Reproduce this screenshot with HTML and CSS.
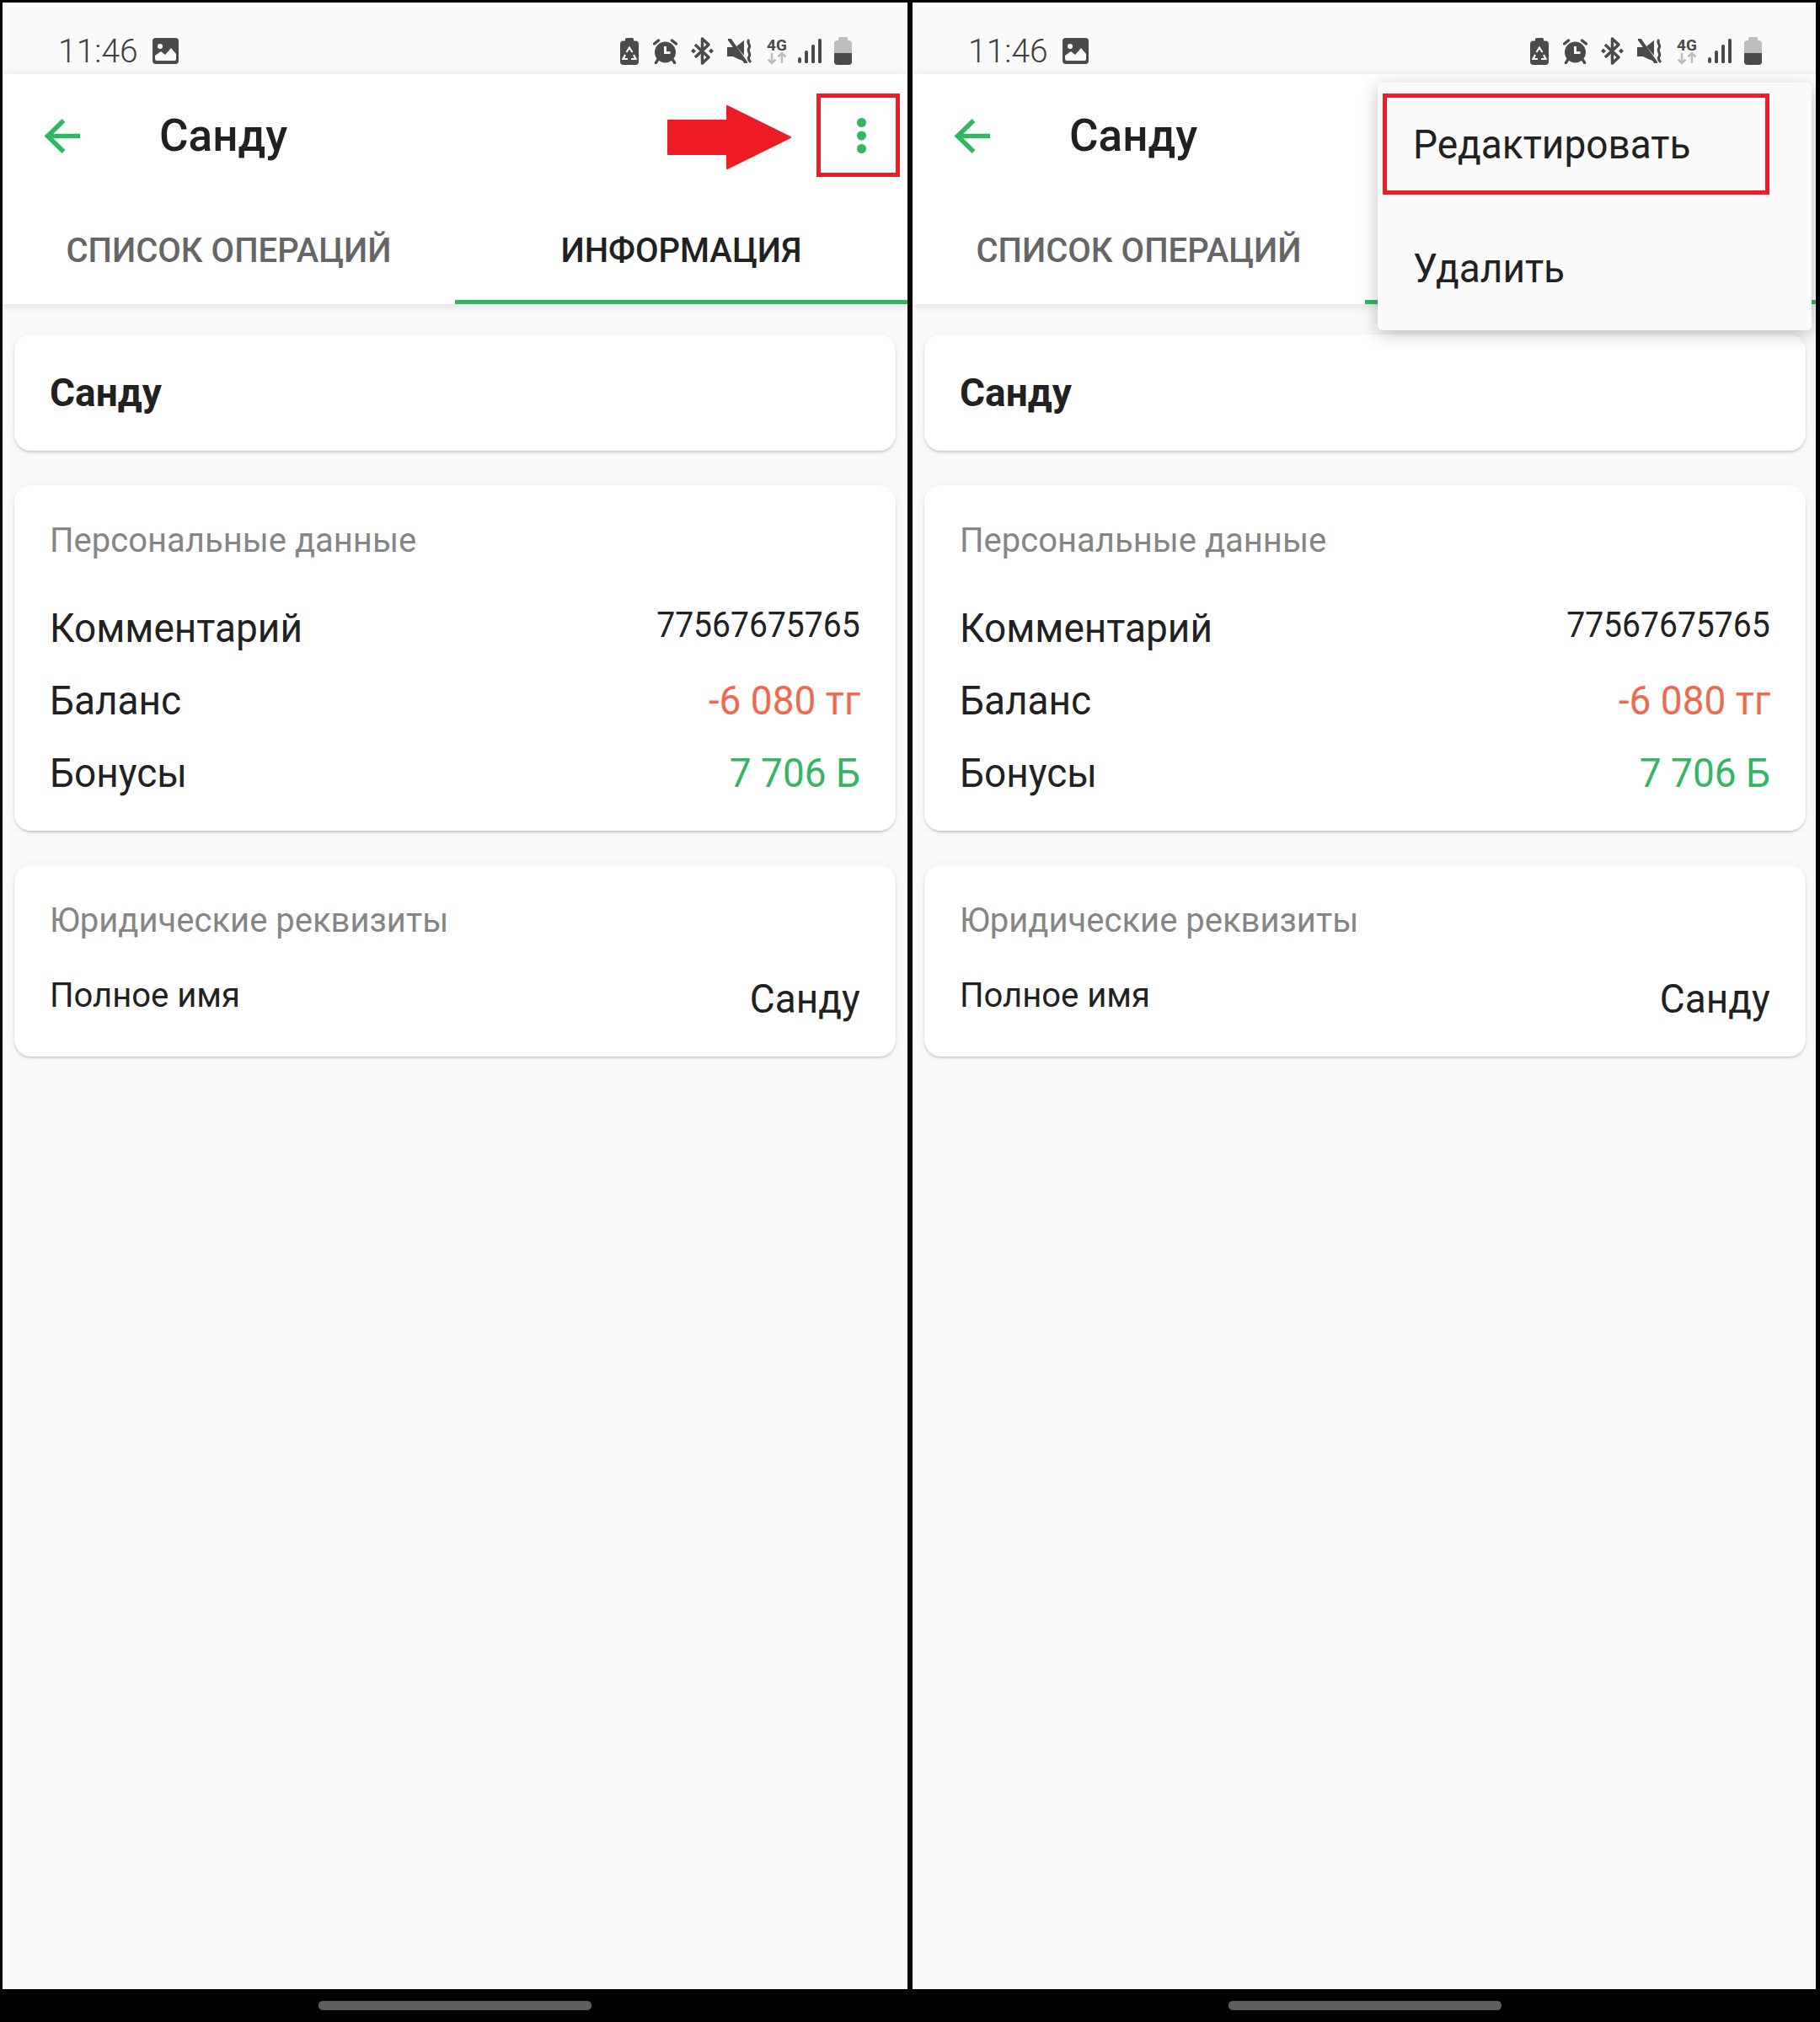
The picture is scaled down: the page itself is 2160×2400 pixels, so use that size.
FILE: index.html
```html
<!DOCTYPE html>
<html lang="ru">
<head>
<meta charset="utf-8">
<title>Санду</title>
<link rel="stylesheet" href="styles.css">
</head>
<body>
<div class="desktop">

  <section class="phone">
    <div class="screen">
      <div class="statusbar">
        <span class="time">11:46</span>
        <svg class="ic-image" width="31" height="31" viewBox="0 0 31 31"><rect width="31" height="31" rx="4" fill="#4a4a4a"/><circle cx="9" cy="10" r="3" fill="#fafafa"/><path d="M3 25V21L10 16L15 20L22 12L28 19V25A2 2 0 0 1 26 27H5A2 2 0 0 1 3 25Z" fill="#fafafa"/></svg>
        <div class="status-icons">
          <svg class="si si-eco" width="22" height="32" viewBox="0 0 22 32"><rect x="6" width="10" height="6" rx="1.5" fill="#4a4a4a"/><rect y="3.500" width="22" height="28.500" rx="4" fill="#4a4a4a"/><g fill="none" stroke="#fafafa" stroke-width="2.200"><path d="M7.500 17L11 11.500L14.500 17"/><path d="M16 20L18.500 25H13"/><path d="M9 25H3.500L6 20"/></g></svg>
          <svg class="si si-alarm" width="29" height="30" viewBox="0 0 29 30"><g fill="none" stroke="#4a4a4a" stroke-width="3.500" stroke-linecap="round"><path d="M1.500 6L6.500 2"/><path d="M22.500 2L27.500 6"/><path d="M5.500 25L3.500 28.500"/><path d="M23.500 25L25.500 28.500"/></g><circle cx="14.500" cy="16" r="12.500" fill="#4a4a4a"/><path d="M14.500 9V16.500H20.500" fill="none" stroke="#fafafa" stroke-width="3"/></svg>
          <svg class="si si-bt" width="27" height="33" viewBox="0 0 27 33"><path d="M5 9L21 24L13.500 31V2L21 9L5 24" fill="none" stroke="#4a4a4a" stroke-width="3.500" stroke-linejoin="round"/><path d="M0 16.500L3 13.500L6 16.500L3 19.500ZM21 16.500L24 13.500L27 16.500L24 19.500Z" fill="#4a4a4a"/></svg>
          <svg class="si si-mute" width="30" height="29" viewBox="0 0 30 29"><path d="M0 10H7L21 27L13 24L7 21H0ZM11 9L20 2V20Z" fill="#4a4a4a"/><path d="M3 1L22 28" stroke="#4a4a4a" stroke-width="4" stroke-linecap="round"/><path d="M26 1C22 5 29 7 26 11C23 15 29 18 26 21C24 24 26 26 28 28" fill="none" stroke="#4a4a4a" stroke-width="3"/></svg>
          <svg class="si si-net" width="24" height="38" viewBox="0 -4 24 38"><text class="net-label" x="12" y="14" text-anchor="middle">4G</text><g fill="none" stroke="#bdbdbd" stroke-width="2.500"><path d="M6 17V29M1.500 24.500L6 29L10.500 24.500"/><path d="M18 29V17M13.500 21.500L18 17L22.500 21.500"/></g></svg>
          <svg class="si si-sig" width="28" height="29" viewBox="0 0 28 29"><g fill="#4a4a4a"><rect y="22" width="4" height="7" rx="2"/><rect x="8" y="14" width="4" height="15" rx="1.500"/><rect x="16" y="7" width="4" height="22" rx="1.500"/><rect x="24" width="4" height="29" rx="1.500"/></g></svg>
          <svg class="si si-batt" width="21" height="33" viewBox="0 0 21 33"><rect x="5" width="11" height="6" rx="1.500" fill="#bdbdbd"/><rect y="4" width="21" height="29" rx="4" fill="#bdbdbd"/><path d="M0 19H21V29A4 4 0 0 1 17 33H4A4 4 0 0 1 0 29Z" fill="#4a4a4a"/></svg>
        </div>
      </div>

      <header class="appbar">
        <div class="toolbar">
          <svg class="back" width="42" height="41" viewBox="0 0 42 41"><path d="M42 20.500H3.500M22.500 2L3.500 20.500L22.500 39" fill="none" stroke="#2fb85f" stroke-width="5.500"/></svg>
          <h1 class="title">Санду</h1>
          <svg class="more" width="11" height="42" viewBox="0 0 11 42"><g fill="#2fb85f"><circle cx="5.500" cy="5.500" r="5.500"/><circle cx="5.500" cy="21" r="5.500"/><circle cx="5.500" cy="36.500" r="5.500"/></g></svg>
          <svg class="callout-arrow" width="147" height="76" viewBox="0 0 147 76"><path d="M1 18H71V1L146 38L71 75V58H1Z" fill="#ee1c25" stroke="#ee1c25" stroke-width="2" stroke-linejoin="round"/></svg>
          <div class="callout-box callout-more"></div>
        </div>
        <nav class="tabs">
          <div class="tab">СПИСОК ОПЕРАЦИЙ</div>
          <div class="tab tab-active">ИНФОРМАЦИЯ</div>
        </nav>
      </header>

      <main class="content">
        <div class="card card-name"><span class="name">Санду</span></div>
        <div class="card">
          <h2 class="card-title">Персональные данные</h2>
          <div class="rows">
            <div class="row"><span class="label">Комментарий</span><span class="value value-small">77567675765</span></div>
            <div class="row"><span class="label">Баланс</span><span class="value value-neg">-6 080 тг</span></div>
            <div class="row"><span class="label">Бонусы</span><span class="value value-pos">7 706 Б</span></div>
          </div>
        </div>
        <div class="card">
          <h2 class="card-title">Юридические реквизиты</h2>
          <div class="rows rows-legal">
            <div class="row"><span class="label label-small">Полное имя</span><span class="value">Санду</span></div>
          </div>
        </div>
      </main>
    </div>
    <div class="navbar"><span class="handle"></span></div>
  </section>

  <section class="phone">
    <div class="screen">
      <div class="statusbar">
        <span class="time">11:46</span>
        <svg class="ic-image" width="31" height="31" viewBox="0 0 31 31"><rect width="31" height="31" rx="4" fill="#4a4a4a"/><circle cx="9" cy="10" r="3" fill="#fafafa"/><path d="M3 25V21L10 16L15 20L22 12L28 19V25A2 2 0 0 1 26 27H5A2 2 0 0 1 3 25Z" fill="#fafafa"/></svg>
        <div class="status-icons">
          <svg class="si si-eco" width="22" height="32" viewBox="0 0 22 32"><rect x="6" width="10" height="6" rx="1.5" fill="#4a4a4a"/><rect y="3.500" width="22" height="28.500" rx="4" fill="#4a4a4a"/><g fill="none" stroke="#fafafa" stroke-width="2.200"><path d="M7.500 17L11 11.500L14.500 17"/><path d="M16 20L18.500 25H13"/><path d="M9 25H3.500L6 20"/></g></svg>
          <svg class="si si-alarm" width="29" height="30" viewBox="0 0 29 30"><g fill="none" stroke="#4a4a4a" stroke-width="3.500" stroke-linecap="round"><path d="M1.500 6L6.500 2"/><path d="M22.500 2L27.500 6"/><path d="M5.500 25L3.500 28.500"/><path d="M23.500 25L25.500 28.500"/></g><circle cx="14.500" cy="16" r="12.500" fill="#4a4a4a"/><path d="M14.500 9V16.500H20.500" fill="none" stroke="#fafafa" stroke-width="3"/></svg>
          <svg class="si si-bt" width="27" height="33" viewBox="0 0 27 33"><path d="M5 9L21 24L13.500 31V2L21 9L5 24" fill="none" stroke="#4a4a4a" stroke-width="3.500" stroke-linejoin="round"/><path d="M0 16.500L3 13.500L6 16.500L3 19.500ZM21 16.500L24 13.500L27 16.500L24 19.500Z" fill="#4a4a4a"/></svg>
          <svg class="si si-mute" width="30" height="29" viewBox="0 0 30 29"><path d="M0 10H7L21 27L13 24L7 21H0ZM11 9L20 2V20Z" fill="#4a4a4a"/><path d="M3 1L22 28" stroke="#4a4a4a" stroke-width="4" stroke-linecap="round"/><path d="M26 1C22 5 29 7 26 11C23 15 29 18 26 21C24 24 26 26 28 28" fill="none" stroke="#4a4a4a" stroke-width="3"/></svg>
          <svg class="si si-net" width="24" height="38" viewBox="0 -4 24 38"><text class="net-label" x="12" y="14" text-anchor="middle">4G</text><g fill="none" stroke="#bdbdbd" stroke-width="2.500"><path d="M6 17V29M1.500 24.500L6 29L10.500 24.500"/><path d="M18 29V17M13.500 21.500L18 17L22.500 21.500"/></g></svg>
          <svg class="si si-sig" width="28" height="29" viewBox="0 0 28 29"><g fill="#4a4a4a"><rect y="22" width="4" height="7" rx="2"/><rect x="8" y="14" width="4" height="15" rx="1.500"/><rect x="16" y="7" width="4" height="22" rx="1.500"/><rect x="24" width="4" height="29" rx="1.500"/></g></svg>
          <svg class="si si-batt" width="21" height="33" viewBox="0 0 21 33"><rect x="5" width="11" height="6" rx="1.500" fill="#bdbdbd"/><rect y="4" width="21" height="29" rx="4" fill="#bdbdbd"/><path d="M0 19H21V29A4 4 0 0 1 17 33H4A4 4 0 0 1 0 29Z" fill="#4a4a4a"/></svg>
        </div>
      </div>

      <header class="appbar">
        <div class="toolbar">
          <svg class="back" width="42" height="41" viewBox="0 0 42 41"><path d="M42 20.500H3.500M22.500 2L3.500 20.500L22.500 39" fill="none" stroke="#2fb85f" stroke-width="5.500"/></svg>
          <h1 class="title">Санду</h1>
        </div>
        <nav class="tabs">
          <div class="tab">СПИСОК ОПЕРАЦИЙ</div>
          <div class="tab tab-active">ИНФОРМАЦИЯ</div>
        </nav>
      </header>

      <main class="content">
        <div class="card card-name"><span class="name">Санду</span></div>
        <div class="card">
          <h2 class="card-title">Персональные данные</h2>
          <div class="rows">
            <div class="row"><span class="label">Комментарий</span><span class="value value-small">77567675765</span></div>
            <div class="row"><span class="label">Баланс</span><span class="value value-neg">-6 080 тг</span></div>
            <div class="row"><span class="label">Бонусы</span><span class="value value-pos">7 706 Б</span></div>
          </div>
        </div>
        <div class="card">
          <h2 class="card-title">Юридические реквизиты</h2>
          <div class="rows rows-legal">
            <div class="row"><span class="label label-small">Полное имя</span><span class="value">Санду</span></div>
          </div>
        </div>
      </main>

      <div class="menu">
        <div class="menu-item">Редактировать</div>
        <div class="menu-item">Удалить</div>
        <div class="callout-box callout-edit"></div>
      </div>
    </div>
    <div class="navbar"><span class="handle"></span></div>
  </section>

</div>
</body>
</html>
```

FILE: styles.css
```css
html, body {
  margin: 0;
  background: #000;
}

body {
  font-family: Roboto, "Noto Sans", sans-serif;
  color: #212121;
}

.desktop {
  display: flex;
  gap: 6px;
  box-sizing: border-box;
  width: 2155px;
  height: 2400px;
  padding: 3px 0 0 3px;
  overflow: hidden;
}

.phone {
  flex: none;
  display: flex;
  flex-direction: column;
  width: 1074px;
  height: 2397px;
}

.screen {
  position: relative;
  flex: none;
  height: 2358px;
  background: #fafafa;
  overflow: hidden;
}

.navbar {
  flex: 1;
  display: flex;
  align-items: center;
  justify-content: center;
}

.handle {
  width: 324px;
  height: 11px;
  border-radius: 5px;
  background: #5f5f5f;
}

/* status bar */
.statusbar {
  display: flex;
  align-items: center;
  box-sizing: border-box;
  height: 85px;
  padding: 30px 66px 0 66px;
}

.time {
  font-size: 39px;
  font-weight: 300;
  line-height: 44px;
  color: #3f3f3f;
}

.ic-image {
  margin-left: 17.500px;
}

.status-icons {
  display: flex;
  align-items: center;
  margin-left: auto;
}

.si { flex: none; }
.si-alarm { margin-left: 17px; }
.si-bt { margin-left: 16px; }
.si-mute { margin-left: 16px; }
.si-net { margin-left: 17px; }
.si-sig { margin-left: 13px; }
.si-batt { margin-left: 15px; }

.net-label {
  font-family: Roboto, sans-serif;
  font-size: 19px;
  font-weight: 700;
  fill: #4a4a4a;
}

/* app bar */
.appbar {
  position: relative;
  background: #fff;
  box-shadow: 0 2px 12px rgba(0, 0, 0, 0.12);
}

.toolbar {
  position: relative;
  display: flex;
  align-items: center;
  height: 146px;
  padding: 0 49px 0 50px;
}

.title {
  margin: 0 0 0 94px;
  font-size: 53px;
  font-weight: 500;
  line-height: 62px;
  color: #212121;
}

.more {
  margin-left: auto;
}

.callout-arrow {
  position: absolute;
  top: 37px;
  right: 138px;
}

.callout-box {
  position: absolute;
  box-sizing: border-box;
  border: 5px solid #ee1c25;
}

.callout-more {
  top: 23px;
  right: 9px;
  width: 99px;
  height: 99px;
}

.tabs {
  display: flex;
  height: 127px;
}

.tab {
  flex: 1;
  display: flex;
  align-items: center;
  justify-content: center;
  font-size: 40px;
  font-weight: 500;
  color: #666;
}

.tab-active {
  color: #212121;
  box-shadow: inset 0 -5px 0 #35b563;
}

/* cards */
.content {
  display: flex;
  flex-direction: column;
  gap: 41px;
  padding: 36px 14px 0 14px;
}

.card {
  box-sizing: border-box;
  padding: 43px 42px 26px 42px;
  border-radius: 20px;
  background: #fff;
  box-shadow: 0 2px 3px rgba(0, 0, 0, 0.18), 0 0 16px rgba(0, 0, 0, 0.04);
}

.card-name {
  display: flex;
  align-items: center;
  height: 138px;
  padding-top: 0;
  padding-bottom: 0;
}

.name {
  font-size: 46px;
  font-weight: 700;
}

.card-title {
  margin: 0;
  font-size: 40px;
  font-weight: 400;
  line-height: 46px;
  color: #858585;
}

.rows {
  margin: 38px 0 -1px;
}

.rows-legal {
  margin: 27px 0 0;
}

.row {
  display: flex;
  justify-content: space-between;
  align-items: flex-start;
  height: 86px;
}

.rows-legal .row {
  height: 85px;
}

/* the reference's body text is set slightly narrower than stock Roboto */
.label {
  font-size: 48px;
  line-height: 85px;
  transform: scaleX(0.958);
  transform-origin: left center;
}

.label-small {
  font-size: 40px;
  line-height: 78px;
  transform: none;
}

.value {
  font-size: 48px;
  line-height: 85px;
  transform: scaleX(0.958);
  transform-origin: right center;
}

.value-small {
  font-size: 42px;
  line-height: 78px;
  transform: scaleX(0.93);
}

.value-neg { color: #ee6a4d; }
.value-pos { color: #35b563; }

/* popup menu */
.menu {
  position: absolute;
  top: 95px;
  left: 552px;
  box-sizing: border-box;
  width: 515px;
  height: 294px;
  border-radius: 6px;
  background: #fafafa;
  box-shadow: 0 4px 20px rgba(0, 0, 0, 0.25);
}

.menu-item {
  display: flex;
  align-items: center;
  height: 147px;
  padding-left: 42px;
  font-size: 48px;
  transform: scaleX(0.958);
  transform-origin: 42px center;
}

.callout-edit {
  top: 13px;
  left: 6px;
  width: 459px;
  height: 120px;
}
```
